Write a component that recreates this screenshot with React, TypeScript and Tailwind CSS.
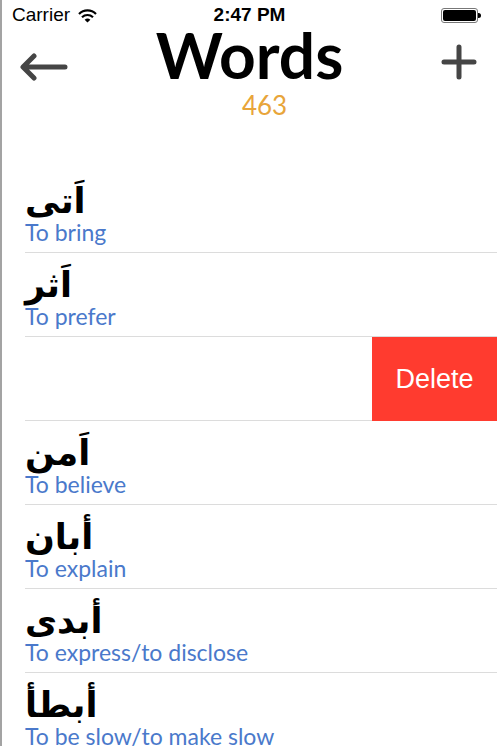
import React from "react";

const words = [
  { ar: "اَتى", en: "To bring" },
  { ar: "اَثر", en: "To prefer" },
  { ar: "", en: "", swiped: true },
  { ar: "اَمن", en: "To believe" },
  { ar: "أبان", en: "To explain" },
  { ar: "أبدى", en: "To express/to disclose" },
  { ar: "أبطأ", en: "To be slow/to make slow" },
];

const StatusBar = () => (
  <div className="relative flex h-[31px] items-center px-[10px] text-[19px] text-black [font-family:'Liberation_Sans',sans-serif]">
    <span>Carrier</span>
    <svg className="ml-[8px]" width="19" height="14" viewBox="0 0 19 14">
      <path d="M1 5 A12 12 0 0 1 18 5" fill="none" stroke="#000" strokeWidth="2.2" />
      <path d="M4 8.2 A8 8 0 0 1 15 8.2" fill="none" stroke="#000" strokeWidth="2.2" />
      <path d="M9.5 13.5 L6.6 10.8 A4.2 4.2 0 0 1 12.4 10.8 Z" fill="#000" />
    </svg>
    <span className="absolute left-1/2 -translate-x-1/2 font-bold">2:47 PM</span>
    <div className="ml-auto mr-[6px] flex items-center">
      <div className="h-[15px] w-[37px] rounded-[3px] border border-[#777] p-[1px]">
        <div className="h-full w-full rounded-[2px] bg-black" />
      </div>
      <div className="h-[5px] w-[3px] rounded-r-sm bg-black" />
    </div>
  </div>
);

const Header = () => (
  <div className="grid grid-cols-[1fr_auto_1fr] items-start">
    <svg className="ml-[18px] mt-[22px]" width="48" height="28" viewBox="0 0 48 28">
      <path
        d="M45 14 H4 M14 3 L3 14 L14 25"
        fill="none"
        stroke="#454545"
        strokeWidth="5"
        strokeLinecap="round"
        strokeLinejoin="round"
      />
    </svg>
    <div className="mt-[4px] flex flex-col items-center [font-family:Lato,sans-serif]">
      <div className="text-[64px] font-bold leading-[40px] text-black">Words</div>
      <div className="ml-[30px] mt-[15px] text-[26px] leading-[30px] text-[#e8a53a]">463</div>
    </div>
    <svg className="mr-[20px] mt-[13px] justify-self-end" width="36" height="36" viewBox="0 0 36 36">
      <path
        d="M18 3 V33 M3 18 H33"
        fill="none"
        stroke="#454545"
        strokeWidth="5"
        strokeLinecap="round"
      />
    </svg>
  </div>
);

export default function App() {
  return (
    <div className="h-[746px] w-full overflow-hidden border-l-[2px] border-[#a3a3a3] bg-white">
      <StatusBar />
      <Header />
      <div className="mt-[49px]">
        {words.map((w, i) =>
          w.swiped ? (
            <div key={i} className="flex h-[84px] pl-[23px]">
              <div className="flex-1 border-b border-[#dcdcdc]" />
              <div className="flex w-[125px] items-center justify-center bg-[#ff3b2f] text-[27px] text-white [font-family:'Liberation_Sans',sans-serif]">
                Delete
              </div>
            </div>
          ) : (
            <div key={i} className="h-[84px] pl-[23px]">
              <div className="flex h-full flex-col border-b border-[#dcdcdc] pt-[12px]">
                <div className="self-start text-[35px] font-bold leading-[40px] text-black [font-family:'DejaVu_Sans',sans-serif]">
                  {w.ar}
                </div>
                <div className="-mt-[2px] text-[23px] leading-[26px] text-[#4a79cb] [font-family:Lato,sans-serif]">
                  {w.en}
                </div>
              </div>
            </div>
          )
        )}
      </div>
    </div>
  );
}
